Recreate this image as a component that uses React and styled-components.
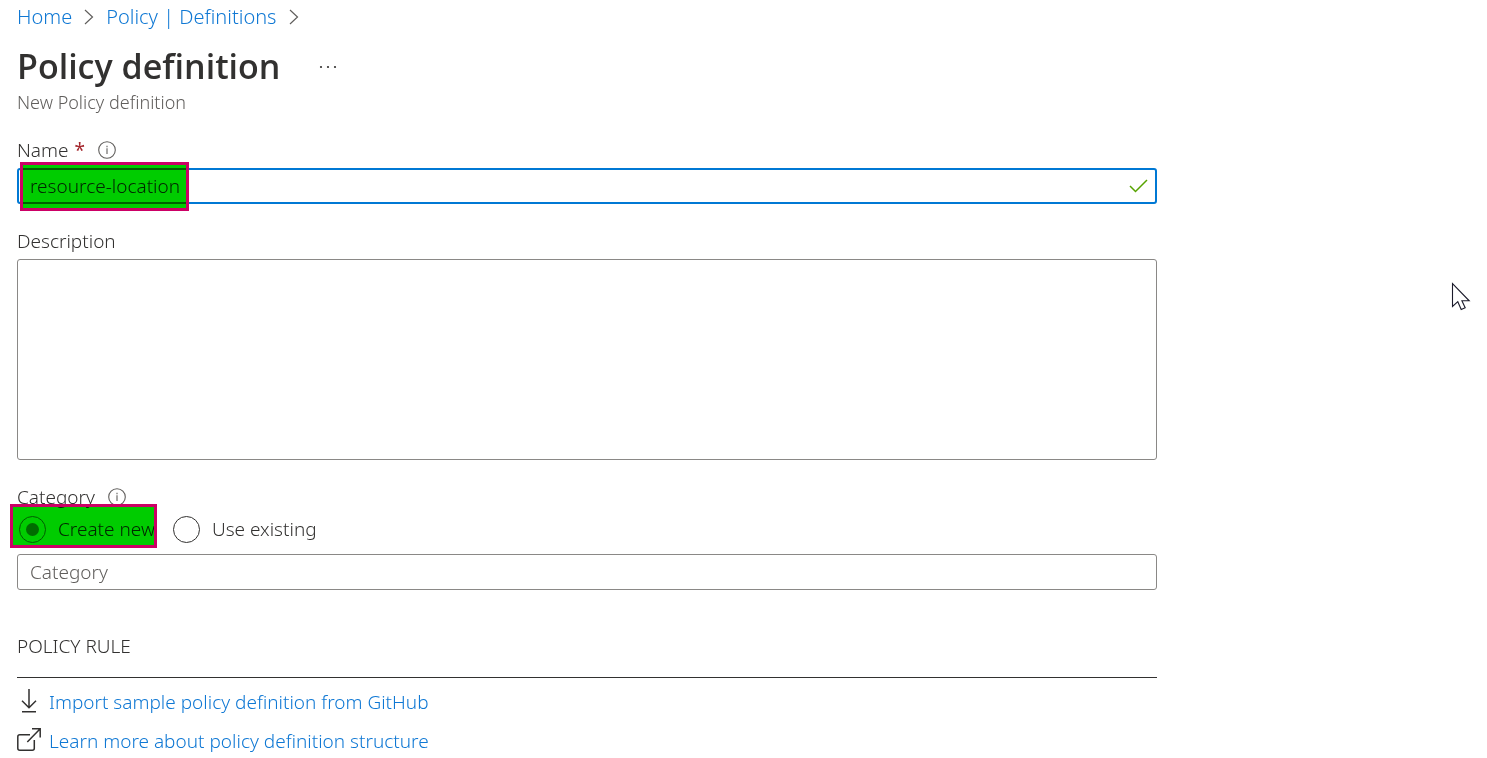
// App.jsx
import React, { useState } from 'react';
import styled, { createGlobalStyle } from 'styled-components';

const GlobalStyle = createGlobalStyle`
  *, *::before, *::after {
    box-sizing: border-box;
  }
  body {
    margin: 0;
    background: #ffffff;
    color: #323130;
    font-family: 'Noto Sans', 'Open Sans', sans-serif;
    font-size: 19px;
    font-weight: 350;
    line-height: 24px;
  }
  input, textarea, button {
    font: inherit;
    color: inherit;
  }
`;

const Page = styled.main`
  position: relative;
  padding: 0 17px;
`;

const Breadcrumb = styled.nav`
  display: flex;
  align-items: center;
  gap: 12px;
  height: 34px;
  font-size: 20px;
`;

const Link = styled.a`
  color: #0f78d4;
  text-decoration: none;
  &:hover {
    text-decoration: underline;
  }
`;

const TitleRow = styled.div`
  display: flex;
  align-items: center;
  gap: 39px;
  margin-top: 8px;
`;

const Title = styled.h1`
  margin: 0;
  font-family: 'Open Sans', 'Noto Sans', sans-serif;
  font-size: 34px;
  font-weight: 600;
  line-height: 48px;
`;

const MoreButton = styled.button`
  display: flex;
  padding: 2px 0 0;
  border: none;
  background: none;
  cursor: pointer;
`;

const Subtitle = styled.p`
  margin: 0 0 24px;
  font-size: 18px;
  color: #605e5c;
`;

const Form = styled.form`
  display: flex;
  flex-direction: column;
  gap: 25px;
  max-width: 1140px;
`;

const Field = styled.div`
  display: flex;
  flex-direction: column;
  gap: 6px;
`;

const RadioField = styled.fieldset`
  display: flex;
  flex-direction: column;
  gap: 6px;
  min-width: 0;
  margin: 0;
  padding: 0;
  border: none;
`;

const LabelRow = styled.div`
  display: flex;
  align-items: center;
  gap: 13px;
`;

const Required = styled.span`
  margin-left: 6px;
  color: #a4262c;
  font-weight: 400;
`;

const InputWrap = styled.div`
  position: relative;
  display: flex;
  align-items: center;
  height: 36px;
  padding: ${({ $active }) => ($active ? '0 7px 0 11px' : '0 12px')};
  border: ${({ $active }) => ($active ? '2px solid #0078d4' : '1px solid #8a8886')};
  border-radius: 3px;
`;

const TextInput = styled.input`
  flex: 1;
  min-width: 0;
  padding: 0;
  border: none;
  outline: none;
  background: none;
  &::placeholder {
    color: #605e5c;
    opacity: 1;
  }
`;

const TextArea = styled.textarea`
  display: block;
  width: 100%;
  height: 201px;
  padding: 6px 12px;
  border: 1px solid #8a8886;
  border-radius: 3px;
  outline: none;
  resize: none;
`;

const Options = styled.div`
  display: flex;
  gap: 16px;
  margin-bottom: 5px;
`;

const Option = styled.label`
  position: relative;
  display: flex;
  align-items: center;
  gap: 12px;
  height: 28px;
  padding-left: 2px;
`;

const Radio = styled.input`
  appearance: none;
  display: grid;
  place-items: center;
  width: 27px;
  height: 27px;
  margin: 0;
  border: 1px solid #323130;
  border-radius: 50%;
  &:checked {
    border-color: #767472;
  }
  &:checked::before {
    content: '';
    width: 13px;
    height: 13px;
    border-radius: 50%;
    background: #8a8886;
  }
`;

// marker pen over a control, the fill lets the content show through
const Highlight = styled.span`
  position: absolute;
  inset: ${({ $inset }) => $inset};
  border: 3px solid #cc0066;
  pointer-events: none;
  &::before {
    content: '';
    position: absolute;
    inset: 0;
    background: #00cc00;
    mix-blend-mode: multiply;
  }
`;

const NameHighlight = styled(Highlight)`
  right: auto;
  width: 169px;
`;

const Section = styled.section`
  max-width: 1140px;
  margin-top: 44px;
`;

const SectionTitle = styled.h2`
  margin: 0;
  padding-bottom: 19px;
  border-bottom: 1px solid #323130;
  font-size: 19px;
  font-weight: 350;
  line-height: 24px;
`;

const LinkList = styled.ul`
  display: flex;
  flex-direction: column;
  gap: 15px;
  margin: 12px 0 0;
  padding: 0;
  list-style: none;
`;

const LinkItem = styled.li`
  display: flex;
  align-items: center;
  gap: 8px;
  height: 24px;
`;

const Pointer = styled.svg`
  position: absolute;
  top: 282px;
  right: 16px;
`;

const Chevron = () => (
  <svg width="10" height="16" viewBox="0 0 10 16" fill="none" stroke="#605e5c" strokeWidth="1.2" aria-hidden="true">
    <path d="M1 1l7.5 7L1 15" />
  </svg>
);

const InfoIcon = () => (
  <svg width="18" height="18" viewBox="0 0 18 18" fill="none" stroke="#605e5c" strokeWidth="1.1" aria-hidden="true">
    <circle cx="9" cy="9" r="8.3" />
    <path d="M9 7.2v5.8M9 4.8v1.4" />
  </svg>
);

const CheckIcon = () => (
  <svg width="19" height="14" viewBox="0 0 19 14" fill="none" stroke="#57a300" strokeWidth="1.5" aria-hidden="true">
    <path d="M1 7l5.5 5.5L18 1" />
  </svg>
);

const DownloadIcon = () => (
  <svg width="24" height="26" viewBox="0 0 24 26" fill="none" stroke="#323130" strokeWidth="1.5" aria-hidden="true">
    <path d="M12 0v19M5 11.8l7 7 7-7M5 22.7h14" />
  </svg>
);

const ExternalIcon = () => (
  <svg width="24" height="26" viewBox="0 0 24 26" fill="none" stroke="#323130" strokeWidth="1.5" aria-hidden="true">
    <path d="M13 6.7H2.8a2 2 0 0 0-2 2v11.5a2 2 0 0 0 2 2h12.5a2 2 0 0 0 2-2V12M15 .8h8.2v8.6M23.2 .8L10.3 14" />
  </svg>
);

const policyLinks = [
  { label: 'Import sample policy definition from GitHub', href: '#import', Icon: DownloadIcon },
  { label: 'Learn more about policy definition structure', href: '#structure', Icon: ExternalIcon },
];

export default function App() {
  const [name, setName] = useState('resource-location');
  const [mode, setMode] = useState('new');

  return (
    <Page>
      <GlobalStyle />
      <Breadcrumb aria-label="Breadcrumb">
        <Link href="#home">Home</Link>
        <Chevron />
        <Link href="#definitions">Policy | Definitions</Link>
        <Chevron />
      </Breadcrumb>
      <TitleRow>
        <Title>Policy definition</Title>
        <MoreButton type="button" aria-label="More">
          <svg width="18" height="4" viewBox="0 0 18 4" fill="#323130" aria-hidden="true">
            <circle cx="2" cy="2" r="1.1" />
            <circle cx="9" cy="2" r="1.1" />
            <circle cx="16" cy="2" r="1.1" />
          </svg>
        </MoreButton>
      </TitleRow>
      <Subtitle>New Policy definition</Subtitle>

      <Form onSubmit={e => e.preventDefault()}>
        <Field>
          <LabelRow>
            <label htmlFor="name">
              Name<Required>*</Required>
            </label>
            <InfoIcon />
          </LabelRow>
          <InputWrap $active>
            <TextInput id="name" required value={name} onChange={e => setName(e.target.value)} />
            <CheckIcon />
            <NameHighlight $inset="-8px auto -9px 1px" />
          </InputWrap>
        </Field>

        <Field>
          <label htmlFor="description">Description</label>
          <TextArea id="description" />
        </Field>

        <RadioField aria-labelledby="category-label">
          <LabelRow>
            <label id="category-label" htmlFor="category">Category</label>
            <InfoIcon />
          </LabelRow>
          <Options>
            <Option>
              <Radio type="radio" name="mode" checked={mode === 'new'} onChange={() => setMode('new')} />
              Create new
              <Highlight $inset="-11px -2px -5px -7px" />
            </Option>
            <Option>
              <Radio type="radio" name="mode" checked={mode === 'existing'} onChange={() => setMode('existing')} />
              Use existing
            </Option>
          </Options>
          <InputWrap>
            <TextInput id="category" placeholder="Category" />
          </InputWrap>
        </RadioField>
      </Form>

      <Section>
        <SectionTitle>POLICY RULE</SectionTitle>
        <LinkList>
          {policyLinks.map(({ label, href, Icon }) => (
            <LinkItem key={href}>
              <Icon />
              <Link href={href}>{label}</Link>
            </LinkItem>
          ))}
        </LinkList>
      </Section>

      <Pointer width="20" height="30" viewBox="0 0 20 30" fill="#ffffff" stroke="#1b1b2b" strokeWidth="1.1" aria-hidden="true">
        <path d="M1.5 1.5v23l5.3-4.8 3.4 7.8 4-1.7-3.3-7h7.3z" />
      </Pointer>
    </Page>
  );
}
